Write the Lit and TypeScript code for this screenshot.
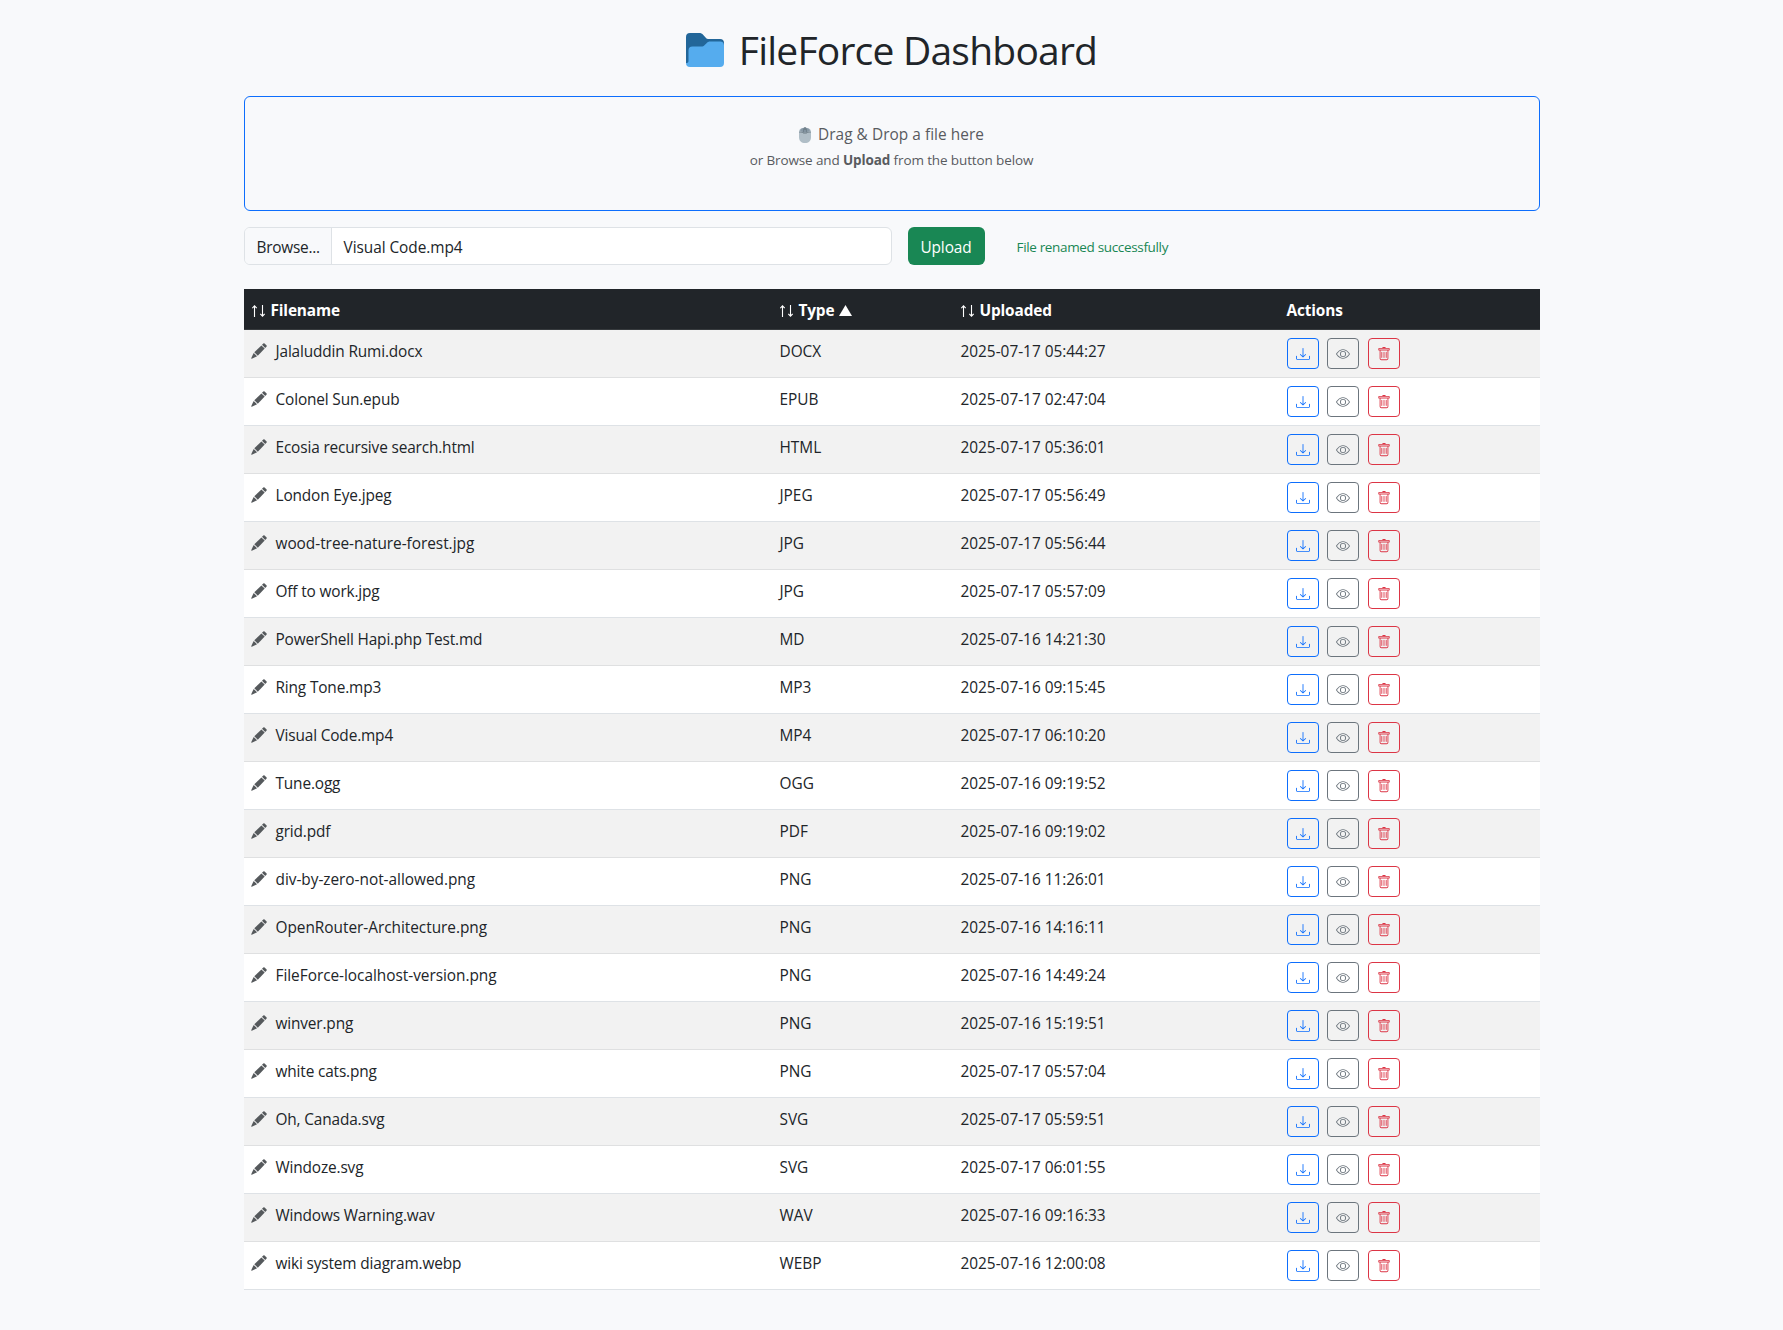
import { LitElement, html, css, svg } from "lit";
import { customElement, state } from "lit/decorators.js";
import { classMap } from "lit/directives/class-map.js";

interface FileRow {
  name: string;
  type: string;
  uploaded: string;
}

const FILES: FileRow[] = [
  ["Jalaluddin Rumi.docx", "DOCX", "2025-07-17 05:44:27"],
  ["Colonel Sun.epub", "EPUB", "2025-07-17 02:47:04"],
  ["Ecosia recursive search.html", "HTML", "2025-07-17 05:36:01"],
  ["London Eye.jpeg", "JPEG", "2025-07-17 05:56:49"],
  ["wood-tree-nature-forest.jpg", "JPG", "2025-07-17 05:56:44"],
  ["Off to work.jpg", "JPG", "2025-07-17 05:57:09"],
  ["PowerShell Hapi.php Test.md", "MD", "2025-07-16 14:21:30"],
  ["Ring Tone.mp3", "MP3", "2025-07-16 09:15:45"],
  ["Visual Code.mp4", "MP4", "2025-07-17 06:10:20"],
  ["Tune.ogg", "OGG", "2025-07-16 09:19:52"],
  ["grid.pdf", "PDF", "2025-07-16 09:19:02"],
  ["div-by-zero-not-allowed.png", "PNG", "2025-07-16 11:26:01"],
  ["OpenRouter-Architecture.png", "PNG", "2025-07-16 14:16:11"],
  ["FileForce-localhost-version.png", "PNG", "2025-07-16 14:49:24"],
  ["winver.png", "PNG", "2025-07-16 15:19:51"],
  ["white cats.png", "PNG", "2025-07-17 05:57:04"],
  ["Oh, Canada.svg", "SVG", "2025-07-17 05:59:51"],
  ["Windoze.svg", "SVG", "2025-07-17 06:01:55"],
  ["Windows Warning.wav", "WAV", "2025-07-16 09:16:33"],
  ["wiki system diagram.webp", "WEBP", "2025-07-16 12:00:08"],
].map(([name, type, uploaded]) => ({ name, type, uploaded }));

const folder = html`<svg class="folder" viewBox="0 0 38 34" aria-hidden="true">
  <path fill="#226699" d="M0 30V4a4 4 0 0 1 4-4h9c2 0 3 .6 4.300 2l2.500 2.700c.9 1 1.700 1.300 3 1.300H34a4 4 0 0 1 4 4v20z" />
  <path fill="#55acee" d="M34 8.500h-9.500c-2 0-3 .5-4.200 1.900l-1.600 1.700c-1 1.100-1.900 1.500-3.500 1.500H6.500a4 4 0 0 0-4 4V28c0 1.500-.8 2-2.500 2a4 4 0 0 0 4 4h30a4 4 0 0 0 4-4V12.500a4 4 0 0 0-4-4z" />
</svg>`;

const mouse = html`<svg class="mouse" viewBox="0 0 12 16" aria-hidden="true">
  <path fill="#b0bec7" d="M0 5C0 2 2.500.7 6 .7S12 2 12 5v5c0 4-2.500 6-6 6s-6-2-6-6z" />
  <path fill="#8899a6" d="M1 3.500C1.800 1.600 3.400.7 6 .7s4.200.9 5 2.800L7.500 5.500h-3z" />
  <path fill="none" stroke="#66757f" stroke-width=".8" d="M.3 5.200c2-.3 3.400.1 4.300.9h2.800c.9-.8 2.300-1.200 4.300-.9M4.700 1.500v4M7.300 1.500v4" />
  <path fill="#66757f" d="M5.400 0h1.200v3H5.400z" />
</svg>`;

const download = svg`<path d="M.5 9.900a.5.5 0 0 1 .5.5v2.500a1 1 0 0 0 1 1h12a1 1 0 0 0 1-1v-2.500a.5.5 0 0 1 1 0v2.500a2 2 0 0 1-2 2H2a2 2 0 0 1-2-2v-2.500a.5.5 0 0 1 .5-.5"/><path d="M7.646 11.854a.5.5 0 0 0 .708 0l3-3a.5.5 0 0 0-.708-.708L8.500 10.293V1.500a.5.5 0 0 0-1 0v8.793L5.354 8.146a.5.5 0 1 0-.708.708z"/>`;
const eye = svg`<path d="M16 8s-3-5.500-8-5.500S0 8 0 8s3 5.500 8 5.500S16 8 16 8M1.173 8a13 13 0 0 1 1.660-2.043C4.120 4.668 5.880 3.500 8 3.500s3.879 1.168 5.168 2.457A13 13 0 0 1 14.828 8q-.086.130-.195.288c-.335.480-.830 1.120-1.465 1.755C11.879 11.332 10.119 12.500 8 12.500s-3.879-1.168-5.168-2.457A13 13 0 0 1 1.172 8z"/><path d="M8 5.500a2.500 2.500 0 1 0 0 5 2.500 2.500 0 0 0 0-5M4.500 8a3.500 3.500 0 1 1 7 0 3.500 3.500 0 0 1-7 0"/>`;
const trash = svg`<path d="M5.500 5.500A.5.5 0 0 1 6 6v6a.5.5 0 0 1-1 0V6a.5.5 0 0 1 .5-.5m2.500 0a.5.5 0 0 1 .5.5v6a.5.5 0 0 1-1 0V6a.5.5 0 0 1 .5-.5m3 .5a.5.5 0 0 0-1 0v6a.5.5 0 0 0 1 0z"/><path d="M14.500 3a1 1 0 0 1-1 1H13v9a2 2 0 0 1-2 2H5a2 2 0 0 1-2-2V4h-.5a1 1 0 0 1-1-1V2a1 1 0 0 1 1-1H6a1 1 0 0 1 1-1h2a1 1 0 0 1 1 1h3.500a1 1 0 0 1 1 1zM4.118 4 4 4.059V13a1 1 0 0 0 1 1h6a1 1 0 0 0 1-1V4.059L11.882 4zM2.500 3h11V2h-11z"/><path opacity=".45" d="M2.500 2h11v1h-11z"/>`;
const pencil = svg`<path d="M12.300.5 11 1.800 14.200 5l1.400-1.400a.9.9 0 0 0 0-1.200L13.600.5a.9.9 0 0 0-1.300 0z"/><path d="M10.400 2.400 3.300 9.200l3.500 3.500 6.900-7.100z"/><path d="M2.700 9.900 1.700 12 .2 15.200c-.1.400.2.700.6.600L4 14.300l2.100-1z"/>`;

const icon = (shape: unknown) =>
  html`<svg class="icon" viewBox="0 0 16 16" fill="currentColor" aria-hidden="true">${shape}</svg>`;

const sortArrows = html`<svg class="sort" viewBox="0 0 14 12" aria-hidden="true">
  <path fill="none" stroke="currentColor" stroke-width="1.100" d="M2.500 12V1M.3 3.200 2.500.8l2.200 2.400M10.500 0v11M8.300 8.800l2.200 2.400 2.200-2.400" />
</svg>`;

@customElement("app-root")
export class AppRoot extends LitElement {
  @state() private files = FILES;

  static styles = css`
    * { box-sizing: border-box; }
    :host {
      display: block;
      min-height: 1330px;
      background: #f8f9fb;
      color: #212529;
      font: 400 15.400px/24px "Open Sans", "Noto Sans", sans-serif;
      letter-spacing: -0.150px;
    }
    .container { width: 1296px; margin: 0 auto; padding-top: 26px; }
    h1 {
      display: flex; align-items: center; justify-content: center; gap: 15px;
      height: 48px; margin: 0 0 22px;
      font-size: 39px; font-weight: 400; line-height: 48px; letter-spacing: -0.780px;
    }
    .folder { width: 38px; height: 34px; }
    .drop {
      display: flex; flex-direction: column; align-items: center;
      height: 115px; padding-top: 25px;
      border: 1px solid #0d6efd; border-radius: 6px;
      color: #585b5f;
    }
    .drop .lead { display: flex; align-items: center; gap: 7px; height: 26px; letter-spacing: 0.050px; }
    .mouse { width: 12px; height: 16px; }
    .drop small { font-size: 13.500px; line-height: 24px; letter-spacing: -0.120px; }
    .drop b { font-weight: 700; }
    .upload { display: flex; align-items: center; margin: 16px 0 24px; height: 38px; }
    .picker {
      display: flex; width: 648px; height: 38px; overflow: hidden;
      border: 1px solid #dee2e6; border-radius: 6px; background: #fff; line-height: 40px;
    }
    .browse { width: 87px; padding-left: 12px; border-right: 1px solid #dee2e6; background: #f8f9fb; letter-spacing: -0.250px; }
    .chosen { padding-left: 12px; letter-spacing: -0.050px; }
    .send {
      width: 77px; height: 38px; margin-left: 16px; padding: 3px 0 0; border: 0; border-radius: 6px;
      background: #198754; color: #fff; font: inherit; letter-spacing: -0.100px;
    }
    .status { margin-left: 32px; padding-top: 2px; color: #198754; font-size: 13.500px; letter-spacing: -0.340px; }
    .row { display: grid; grid-template-columns: 528px 181px 326px 1fr; height: 48px; border-bottom: 1px solid #dee2e6; background: #fff; }
    .row:nth-child(even) { background: #f2f2f2; border-bottom-color: #dfe0e1; }
    .row.head { height: 41px; background: #212529; color: #fff; font-weight: 700; border-bottom-color: #373b3e; }
    .cell { display: flex; padding: 10px 8px 0; white-space: pre; }
    .kind, .date { letter-spacing: -0.010px; }
    .hyphenated { letter-spacing: -0.030px; }
    .sort { width: 14px; height: 12px; margin: 6px 5px 0 0; }
    .tri { width: 13px; height: 11px; margin: 6px 0 0 5px; fill: #fff; }
    .edit { display: flex; width: 24px; color: #55595c; }
    .edit .icon { width: 16px; height: 16px; margin: 3px 0 0 -0.500px; }
    .actions { gap: 8.500px; padding-top: 8px; }
    .btn {
      display: flex; align-items: center; justify-content: center;
      width: 32px; height: 31px; padding: 1px 0 0; border: 1px solid; border-radius: 4px; background: transparent;
    }
    .btn .icon { width: 14px; height: 14px; }
    .get { color: #0d6efd; }
    .view { color: #6c757d; }
    .del { color: #dc3545; }
  `;

  render() {
    return html`
      <main class="container">
        <h1>${folder}<span>FileForce Dashboard</span></h1>
        <section class="drop">
          <div class="lead">${mouse}<span>Drag &amp; Drop a file here</span></div>
          <small>or Browse and <b>Upload</b> from the button below</small>
        </section>
        <section class="upload">
          <div class="picker"><span class="browse">Browse...</span><span class="chosen">Visual Code.mp4</span></div>
          <button class="send">Upload</button>
          <span class="status">File renamed successfully</span>
        </section>
        <section class="table">
          <div class="row head">
            <div class="cell">${sortArrows}Filename</div>
            <div class="cell">${sortArrows}Type<svg class="tri" viewBox="0 0 13 11"><path d="M6.500 0 13 11H0z" /></svg></div>
            <div class="cell">${sortArrows}Uploaded</div>
            <div class="cell">Actions</div>
          </div>
          ${this.files.map(
            (f) => html`<div class="row">
              <div class="cell"><span class="edit">${icon(pencil)}</span><span class=${classMap({ hyphenated: f.name.includes("-") })}>${f.name}</span></div>
              <div class="cell kind">${f.type}</div>
              <div class="cell date">${f.uploaded}</div>
              <div class="cell actions"><button class="btn get" aria-label="Download">${icon(download)}</button><button class="btn view" aria-label="View">${icon(eye)}</button><button class="btn del" aria-label="Delete">${icon(trash)}</button></div>
            </div>`
          )}
        </section>
      </main>
    `;
  }
}
